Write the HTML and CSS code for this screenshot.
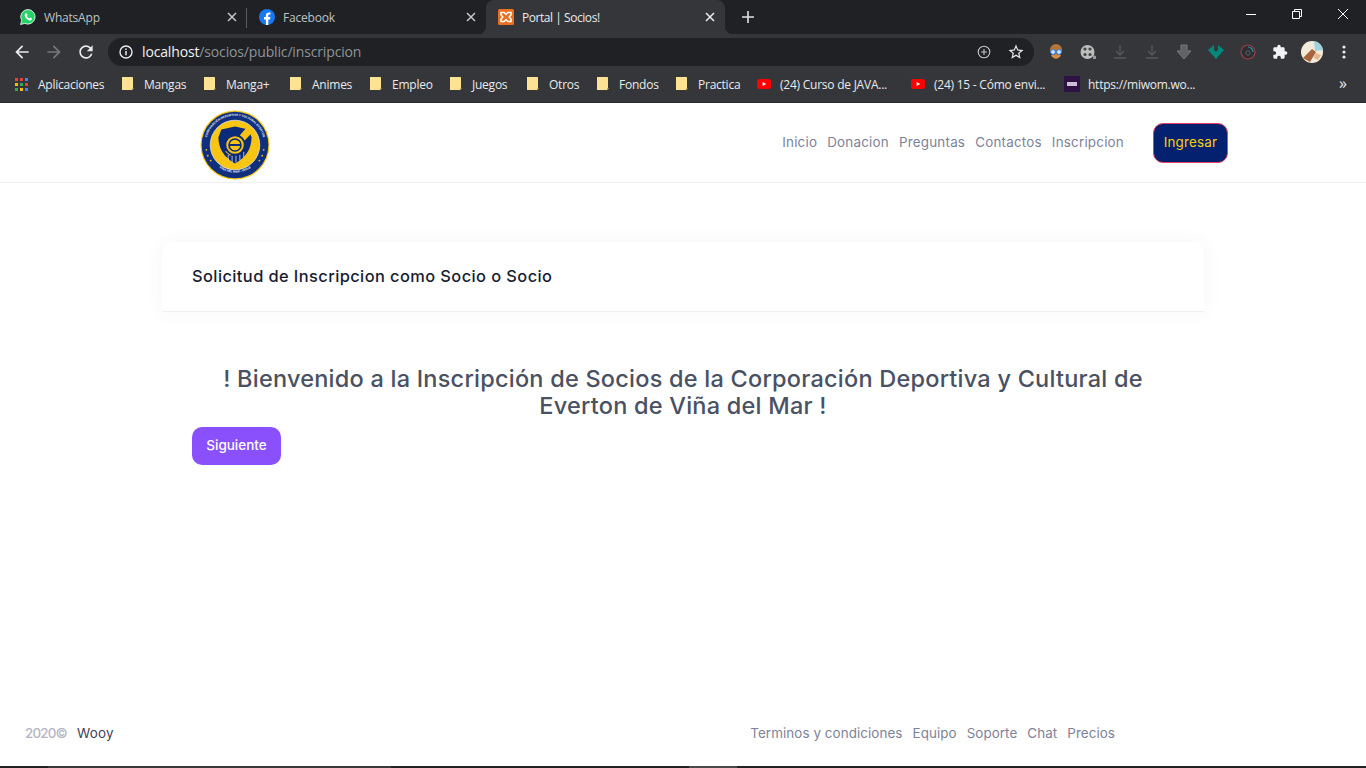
FILE: index.html
```html
<!DOCTYPE html>
<html lang="es">
<head>
<meta charset="utf-8">
<title>Portal | Socios!</title>
<link rel="stylesheet" href="styles.css">
</head>
<body>
<svg class="defs" width="0" height="0" aria-hidden="true">
  <symbol id="folder" viewBox="0 0 12 14"><path d="M0 0h10.5L11 .5V11l-1 0v2H0z" fill="#fde293"/><path d="M10 11h2l-2 2.6z" fill="#c9a94f"/></symbol>
  <symbol id="yt" viewBox="0 0 14 10"><rect width="14" height="10" rx="2.5" fill="#f00"/><path d="M5.6 3l3.6 2-3.6 2z" fill="#fff"/></symbol>
  <symbol id="x" viewBox="0 0 10 10"><path d="M1 1l8 8M9 1L1 9" stroke="currentColor" stroke-width="1.5" fill="none"/></symbol>
  <symbol id="dl" viewBox="0 0 16 16"><path d="M8 1v9M4 7l4 4 4-4M2 14h12" stroke="#56585c" stroke-width="1.3" fill="none"/></symbol>
</svg>

<div class="tabstrip">
  <div class="tab">
    <svg class="favicon" viewBox="0 0 16 16"><path d="M8 .5a7.3 7.3 0 0 0-6.3 11L.6 15.5l4.1-1.1A7.3 7.3 0 1 0 8 .5z" fill="#25d366" stroke="#fff" stroke-width=".8"/><path d="M5.6 4.2c-.9.6-1.2 1.8-.6 3.2.7 1.7 2.3 3.3 4 3.9 1.3.5 2.5.1 2.9-.9l.1-.8-1.9-1-.8.9c-.9-.3-2-1.4-2.4-2.4l.7-.8-.8-2z" fill="#fff"/></svg>
    <span class="tab-title">WhatsApp</span>
    <svg class="tab-close"><use href="#x"/></svg>
  </div>
  <i class="tab-sep"></i>
  <div class="tab">
    <svg class="favicon" viewBox="0 0 16 16"><circle cx="8" cy="8" r="8" fill="#1877f2"/><path d="M6.9 16v-5.6H5V8h1.9V6.4c0-2 1.1-3 2.9-3 .8 0 1.6.1 1.6.1v1.9h-.9c-1 0-1.2.6-1.2 1.2V8h2.1l-.3 2.4H9.3V16z" fill="#fff"/></svg>
    <span class="tab-title">Facebook</span>
    <svg class="tab-close"><use href="#x"/></svg>
  </div>
  <div class="tab tab-active">
    <svg class="favicon" viewBox="0 0 16 16"><rect width="16" height="16" rx="1.5" fill="#e8701f"/><path d="M3 3.5h3.2L8 5.4l1.8-1.9H13v2.4l-1.9 2.1 1.9 2.1v2.4H9.8L8 10.6l-1.8 1.9H3v-2.4l1.9-2.1L3 5.9z" fill="none" stroke="#fff" stroke-width="1.5"/></svg>
    <span class="tab-title">Portal | Socios!</span>
    <svg class="tab-close"><use href="#x"/></svg>
  </div>
  <svg class="newtab" viewBox="0 0 12 12"><path d="M6 0v12M0 6h12" stroke="#dee1e6" stroke-width="1.6"/></svg>
  <div class="winctl">
    <svg class="win-btn" viewBox="0 0 46 14"><path d="M18 7.5h10" stroke="#fff"/></svg>
    <svg class="win-btn" viewBox="0 0 46 14"><path d="M18.5 4.5h7v7h-7zM20.5 4.5v-2h7v7h-2" stroke="#fff" fill="none"/></svg>
    <svg class="win-btn" viewBox="0 0 46 14"><path d="M18 2l10 10M28 2L18 12" stroke="#fff" fill="none"/></svg>
  </div>
</div>

<div class="toolbar">
  <svg class="nav-ico" viewBox="0 0 24 24"><path fill="#e8eaed" d="M20 11H7.83l5.59-5.59L12 4l-8 8 8 8 1.41-1.41L7.83 13H20v-2z"/></svg>
  <svg class="nav-ico" viewBox="0 0 24 24"><path fill="#75777a" d="M4 11h12.17l-5.59-5.59L12 4l8 8-8 8-1.41-1.41L16.17 13H4v-2z"/></svg>
  <svg class="nav-ico" viewBox="0 0 24 24"><path fill="#e8eaed" d="M17.65 6.35A7.958 7.958 0 0 0 12 4c-4.42 0-7.99 3.58-7.99 8s3.57 8 7.99 8c3.73 0 6.84-2.55 7.73-6h-2.08A5.99 5.99 0 0 1 12 18c-3.31 0-6-2.69-6-6s2.69-6 6-6c1.66 0 3.14.69 4.22 1.78L13 11h7V4l-2.35 2.35z"/></svg>
  <div class="omnibox">
    <svg class="info" viewBox="0 0 14 14"><circle cx="7" cy="7" r="6" fill="none" stroke="#e8eaed" stroke-width="1.4"/><path d="M7 6v4.2M7 3.6v1.5" stroke="#e8eaed" stroke-width="1.5"/></svg>
    <span class="url"><b>localhost</b>/socios/public/inscripcion</span>
    <svg class="omni-ico" viewBox="0 0 16 16"><circle cx="8" cy="8" r="6.6" fill="none" stroke="#c4c6c9" stroke-width="1.3"/><path d="M8 4.6v6.8M4.6 8h6.8" stroke="#c4c6c9" stroke-width="1.3"/></svg>
    <svg class="omni-ico star" viewBox="0 0 24 24"><path fill="#e8eaed" d="M22 9.24l-7.19-.62L12 2 9.19 8.63 2 9.24l5.46 4.73L5.82 21 12 17.27 18.18 21l-1.63-7.03L22 9.24zM12 15.4l-3.76 2.27 1-4.28-3.32-2.88 4.38-.38L12 6.1l1.71 4.04 4.38.38-3.32 2.88 1 4.28L12 15.4z"/></svg>
  </div>
  <div class="exts">
    <svg class="ext" viewBox="0 0 16 16"><circle cx="8" cy="6" r="6" fill="#b5733a"/><path d="M3 11c2 5 8 5 10 0z" fill="#d88a4a"/><circle cx="5" cy="8" r="2.4" fill="#cfe8ff" stroke="#2a7fe0"/><circle cx="11" cy="8" r="2.4" fill="#cfe8ff" stroke="#2a7fe0"/></svg>
    <svg class="ext" viewBox="0 0 16 16"><circle cx="7.5" cy="8" r="7" fill="#bdbdbd"/><circle cx="5" cy="5" r="1.6" fill="#444"/><circle cx="10" cy="5" r="1.6" fill="#444"/><circle cx="5" cy="10.5" r="1.6" fill="#444"/><circle cx="10" cy="10.5" r="1.6" fill="#444"/><path d="M13 11l3 1v3h-3z" fill="#999"/></svg>
    <svg class="ext"><use href="#dl"/></svg>
    <svg class="ext"><use href="#dl"/></svg>
    <svg class="ext" viewBox="0 0 16 16"><path d="M5 1h6v6h4l-7 8-7-8h4z" fill="#5f6164" stroke="#77797c"/></svg>
    <svg class="ext" viewBox="0 0 16 16"><path d="M0 6l6-5v5l2 2 2-2V1l6 5-8 9z" fill="#00897b"/></svg>
    <svg class="ext" viewBox="0 0 16 16"><circle cx="8" cy="8" r="7" fill="#2c2d31" stroke="#a33a4a" stroke-width="1.2"/><path d="M8 3a5 5 0 0 1 5 5" stroke="#1b9aaa" stroke-width="1.2" fill="none"/><circle cx="8" cy="9" r="2.2" fill="none" stroke="#59606a"/></svg>
    <svg class="ext" viewBox="0 0 24 24"><path fill="#f1f3f4" d="M20.5 11H19V7c0-1.1-.9-2-2-2h-4V3.5C13 2.12 11.88 1 10.5 1S8 2.12 8 3.5V5H4c-1.1 0-1.99.9-1.99 2v3.8H3.5c1.49 0 2.7 1.21 2.7 2.7s-1.21 2.7-2.7 2.7H2V20c0 1.1.9 2 2 2h3.8v-1.5c0-1.49 1.21-2.7 2.7-2.7 1.49 0 2.7 1.21 2.7 2.7V22H17c1.1 0 2-.9 2-2v-4h1.5c1.38 0 2.5-1.12 2.5-2.5S21.88 11 20.5 11z"/></svg>
    <svg class="ext avatar" viewBox="0 0 22 22"><circle cx="11" cy="11" r="11" fill="#f3ead9"/><path d="M13 0a11 11 0 0 1 9 9l-8 1z" fill="#9fd3de"/><path d="M2 17l9-9 4 3-6 10z" fill="#a8643c"/><path d="M14 12l6 2-3 5-4-2z" fill="#e6b48e"/></svg>
    <svg class="ext" viewBox="0 0 16 16"><circle cx="8" cy="3" r="1.6" fill="#e8eaed"/><circle cx="8" cy="8" r="1.6" fill="#e8eaed"/><circle cx="8" cy="13" r="1.6" fill="#e8eaed"/></svg>
  </div>
</div>

<div class="bookmarks">
  <div class="bm">
    <svg class="bm-apps" viewBox="0 0 13 13"><rect width="3" height="3" fill="#ea4335"/><rect x="5" width="3" height="3" fill="#ea4335"/><rect x="10" width="3" height="3" fill="#4285f4"/><rect y="5" width="3" height="3" fill="#fbbc04"/><rect x="5" y="5" width="3" height="3" fill="#34a853"/><rect x="10" y="5" width="3" height="3" fill="#ea4335"/><rect y="10" width="3" height="3" fill="#34a853"/><rect x="5" y="10" width="3" height="3" fill="#fbbc04"/><rect x="10" y="10" width="3" height="3" fill="#4285f4"/></svg>
    <span class="bm-apps-label">Aplicaciones</span>
  </div>
  <div class="bm bm-1"><svg class="bm-ico"><use href="#folder"/></svg><span>Mangas</span></div>
  <div class="bm bm-2"><svg class="bm-ico"><use href="#folder"/></svg><span>Manga+</span></div>
  <div class="bm bm-3"><svg class="bm-ico"><use href="#folder"/></svg><span>Animes</span></div>
  <div class="bm bm-4"><svg class="bm-ico"><use href="#folder"/></svg><span>Empleo</span></div>
  <div class="bm bm-5"><svg class="bm-ico"><use href="#folder"/></svg><span>Juegos</span></div>
  <div class="bm bm-6"><svg class="bm-ico"><use href="#folder"/></svg><span>Otros</span></div>
  <div class="bm bm-7"><svg class="bm-ico"><use href="#folder"/></svg><span>Fondos</span></div>
  <div class="bm bm-8"><svg class="bm-ico"><use href="#folder"/></svg><span>Practica</span></div>
  <div class="bm bm-9"><svg class="bm-yt"><use href="#yt"/></svg><span>(24) Curso de JAVA...</span></div>
  <div class="bm bm-10"><svg class="bm-yt"><use href="#yt"/></svg><span>(24) 15 - Cómo envi...</span></div>
  <div class="bm bm-11"><svg class="bm-wom" viewBox="0 0 16 16"><rect width="16" height="16" fill="#2d1243"/><rect x="3" y="6" width="10" height="4" fill="#cbbfd6"/></svg><span>https://miwom.wo...</span></div>
  <span class="bm-more">»</span>
</div>

<div class="page">
  <header class="site-header">
    <svg class="logo" viewBox="0 0 72 72" role="img" aria-label="Everton">
      <circle cx="36" cy="36" r="35.5" fill="#f7c512"/>
      <circle cx="36" cy="36" r="34.3" fill="#10307f"/>
      <circle cx="36" cy="36" r="25.5" fill="#f7c512" stroke="#e8eef8" stroke-width=".7"/>
      <path d="M36 17l14 3 3 8c0 12-6 21-17 27-11-6-17-15-17-27l3-8z" fill="#0b2a78"/>
      <path d="M26 43L48 18l6 5-23 24z" fill="#f7c512"/>
      <path d="M29 46v6M33 47v7M37 47v7M41 46v6M45 43v6" stroke="#dfe7f5" stroke-width=".8"/>
      <circle cx="36" cy="36" r="10" fill="#f7c512" stroke="#0b2a78" stroke-width="2"/>
      <circle cx="36" cy="36" r="6.2" fill="none" stroke="#0b2a78" stroke-width="1.6"/>
      <path d="M30 36h12" stroke="#0b2a78" stroke-width="2"/>
      <defs>
        <path id="ring-top" d="M6 36a30 30 0 0 1 60 0"/>
        <path id="ring-bot" d="M16 56a28 28 0 0 0 40 0"/>
      </defs>
      <text class="logo-ring"><textPath href="#ring-top" startOffset="50%" text-anchor="middle">CORPORACIÓN DEPORTIVA Y CULTURAL EVERTON</textPath></text>
      <text class="logo-ring"><textPath href="#ring-bot" startOffset="50%" text-anchor="middle">VIÑA DEL MAR - CHILE</textPath></text>
      <circle cx="6.5" cy="41" r=".9" fill="#f7c512"/><circle cx="8" cy="47" r=".9" fill="#f7c512"/><circle cx="11" cy="52" r=".9" fill="#f7c512"/><circle cx="65.5" cy="41" r=".9" fill="#f7c512"/><circle cx="64" cy="47" r=".9" fill="#f7c512"/><circle cx="61" cy="52" r=".9" fill="#f7c512"/>
    </svg>
    <nav class="main-nav">
      <a>Inicio</a><a>Donacion</a><a>Preguntas</a><a>Contactos</a><a>Inscripcion</a>
    </nav>
    <a class="btn-login">Ingresar</a>
  </header>

  <main class="content">
    <section class="card">
      <h2 class="card-title">Solicitud de Inscripcion como Socio o Socio</h2>
    </section>
    <div class="welcome">
      <h1 class="welcome-title">! Bienvenido a la Inscripción de Socios de la Corporación Deportiva y Cultural de<br>Everton de Viña del Mar !</h1>
      <a class="btn-next">Siguiente</a>
    </div>
  </main>

  <footer class="site-footer">
    <div class="copy"><span class="year">2020©</span><a class="brand">Wooy</a></div>
    <nav class="foot-nav"><a>Terminos y condiciones</a><a>Equipo</a><a>Soporte</a><a>Chat</a><a>Precios</a></nav>
  </footer>
</div>
<div class="taskbar"><i class="task-a"></i><i class="task-b"></i><i class="task-a task-gap"></i><i class="task-c"></i></div>
</body>
</html>
```
FILE: styles.css
```css
* { box-sizing: border-box; }
html, body { margin: 0; padding: 0; }
body {
  width: 1366px;
  height: 768px;
  overflow: hidden;
  display: flex;
  flex-direction: column;
  background: #fff;
  font-family: "Open Sans", "Liberation Sans", sans-serif;
}
.defs { position: absolute; }

/* Tab strip */
.tabstrip {
  height: 34px;
  flex: none;
  display: flex;
  align-items: stretch;
  padding-left: 8px;
  background: #202124;
  position: relative;
}
.tab {
  width: 239px;
  display: flex;
  align-items: center;
  padding: 0 10px 0 12px;
  color: #bdc1c6;
  font-size: 12px;
  letter-spacing: -.2px;
  position: relative;
}
.tab-sep { width: 1px; height: 20px; margin: 8px 0 0 -1px; background: #5a5c60; flex: none; }
.tab-active {
  background: #35363a;
  color: #e8eaed;
  border-radius: 8px 8px 0 0;
  letter-spacing: -.45px;
}
.tab-active::before, .tab-active::after {
  content: "";
  position: absolute;
  bottom: 0;
  width: 8px;
  height: 8px;
}
.tab-active::before { left: -8px; background: radial-gradient(circle at 0 0, transparent 8px, #35363a 8.5px); }
.tab-active::after { right: -8px; background: radial-gradient(circle at 100% 0, transparent 8px, #35363a 8.5px); }
.favicon { width: 16px; height: 16px; flex: none; margin-right: 8px; }
.tab-title { flex: 1; white-space: nowrap; overflow: hidden; }
.tab-close { width: 10px; height: 10px; flex: none; color: #c4c7cb; }
.tab-active .tab-close { color: #eceef0; }
.newtab { width: 12px; height: 12px; flex: none; margin: 11px 0 0 17px; }
.winctl { margin-left: auto; display: flex; align-items: flex-start; }
.win-btn { width: 46px; height: 14px; margin-top: 7px; }

/* Toolbar */
.toolbar {
  height: 35px;
  flex: none;
  display: flex;
  align-items: center;
  background: #35363a;
  padding-left: 8px;
}
.nav-ico { width: 20px; height: 20px; margin-left: 4px; margin-right: 8px; flex: none; }
.omnibox {
  width: 926px;
  height: 28px;
  margin-left: 4px;
  border-radius: 14px;
  background: #202124;
  display: flex;
  align-items: center;
  padding-left: 11px;
  flex: none;
}
.info { width: 14px; height: 14px; flex: none; margin-right: 9px; }
.url { flex: 1; font-size: 14px; color: #8f9499; letter-spacing: -.15px; white-space: nowrap; }
.url b { font-weight: 400; color: #f1f3f4; }
.omni-ico { width: 14px; height: 14px; flex: none; margin-right: 16px; }
.star { width: 18px; height: 18px; margin-right: 9px; }
.exts { display: flex; align-items: center; margin-left: 14px; }
.ext { width: 16px; height: 16px; flex: none; margin-right: 16px; }
.avatar { width: 22px; height: 22px; margin: 0 13px 0 -3px; }

/* Bookmarks */
.bookmarks {
  height: 34px;
  flex: none;
  display: flex;
  align-items: center;
  background: #35363a;
  border-bottom: 1px solid #2a2b2e;
  padding: 0 0 3px 15px;
  color: #e8eaed;
  font-size: 12px;
  letter-spacing: -.24px;
  white-space: nowrap;
}
.bm { display: flex; align-items: center; flex: none; }
.bm span { display: block; }
.bm-apps { width: 13px; height: 13px; margin-right: 10px; flex: none; }
.bm-apps-label { width: 67px; }
.bm-ico { width: 12px; height: 14px; margin-right: 10px; flex: none; }
.bm-yt { width: 14px; height: 10px; margin-right: 9px; flex: none; }
.bm-wom { width: 16px; height: 16px; margin-right: 8px; flex: none; }
.bm-1 { margin-left: 17px; width: 82px; }
.bm-2 { width: 86px; }
.bm-3 { width: 80px; }
.bm-4 { width: 80px; }
.bm-5 { width: 77px; }
.bm-6 { width: 70px; }
.bm-7 { width: 79px; }
.bm-8 { width: 81px; }
.bm-9 { width: 154px; }
.bm-10 { width: 153px; }
.bm-11 { width: 275px; }
.bm-more { font-size: 16px; line-height: 1; margin-top: -3px; }

/* Page */
.page {
  flex: 1;
  min-height: 0;
  display: flex;
  flex-direction: column;
  font-family: Inter, "Liberation Sans", sans-serif;
}
.site-header {
  height: 80px;
  flex: none;
  display: flex;
  align-items: center;
  padding: 1px 138px 0 200px;
  border-bottom: 1px solid #eff0f2;
}
.logo { width: 70px; height: 70px; flex: none; margin-top: 3px; }
.logo-ring { font-size: 3.1px; font-weight: 700; fill: #f4f6fb; font-family: "Liberation Sans", sans-serif; }
.main-nav { margin-left: auto; margin-bottom: 2px; display: flex; gap: 10px; font-size: 13.4px; letter-spacing: .22px; color: #7e8299; }
.btn-login {
  margin-left: 29px;
  width: 75px;
  height: 40px;
  padding-bottom: 2px;
  display: flex;
  align-items: center;
  justify-content: center;
  background: #03216e;
  border: 1px solid #e5405f;
  border-radius: 10px;
  color: #fbcf0c;
  font-size: 13.4px;
  font-weight: 400;
  letter-spacing: .2px;
}
.content { flex: 1; min-height: 0; padding-top: 59px; }
.card {
  width: 1042px;
  height: 70px;
  margin-left: 162px;
  padding: 0 0 2px 30px;
  display: flex;
  align-items: center;
  background: #fff;
  border-bottom: 1px solid #eff0f2;
  border-radius: 10px 10px 0 0;
  box-shadow: 0 0 20px rgba(76, 87, 125, .05);
}
.card-title { margin: 0; font-size: 16.4px; font-weight: 450; color: #181c32; letter-spacing: .42px; }
.welcome { padding: 53px 192px 0; }
.welcome-title {
  margin: 0 0 8px;
  font-size: 23.5px;
  line-height: 27px;
  font-weight: 450;
  color: #4a5162;
  text-align: center;
  white-space: nowrap;
  letter-spacing: .23px;
}
.btn-next {
  width: 89px;
  height: 38px;
  padding-bottom: 2px;
  display: flex;
  align-items: center;
  justify-content: center;
  border-radius: 10px;
  background: #8950fc;
  color: #fff;
  font-size: 13.5px;
  font-weight: 450;
}
.site-footer {
  height: 63px;
  flex: none;
  display: flex;
  align-items: flex-start;
  padding: 22px 251px 0 25px;
  font-size: 13.4px;
  letter-spacing: .08px;
}
.copy { display: flex; gap: 10px; }
.year { color: #b5b5c3; font-weight: 500; letter-spacing: -.8px; }
.brand { color: #3f4254; letter-spacing: .2px; }
.foot-nav { margin-left: auto; display: flex; gap: 10px; color: #7e8299; }

/* Desktop strip under the window */
.taskbar { height: 2px; flex: none; display: flex; background: #222; }
.taskbar i { display: block; height: 2px; }
.task-a { width: 48px; background: #222; }
.task-b { width: 343px; background: #3a3a3a; }
.task-gap { width: 298px; }
.task-c { width: 48px; background: #4a4a4a; }
```
